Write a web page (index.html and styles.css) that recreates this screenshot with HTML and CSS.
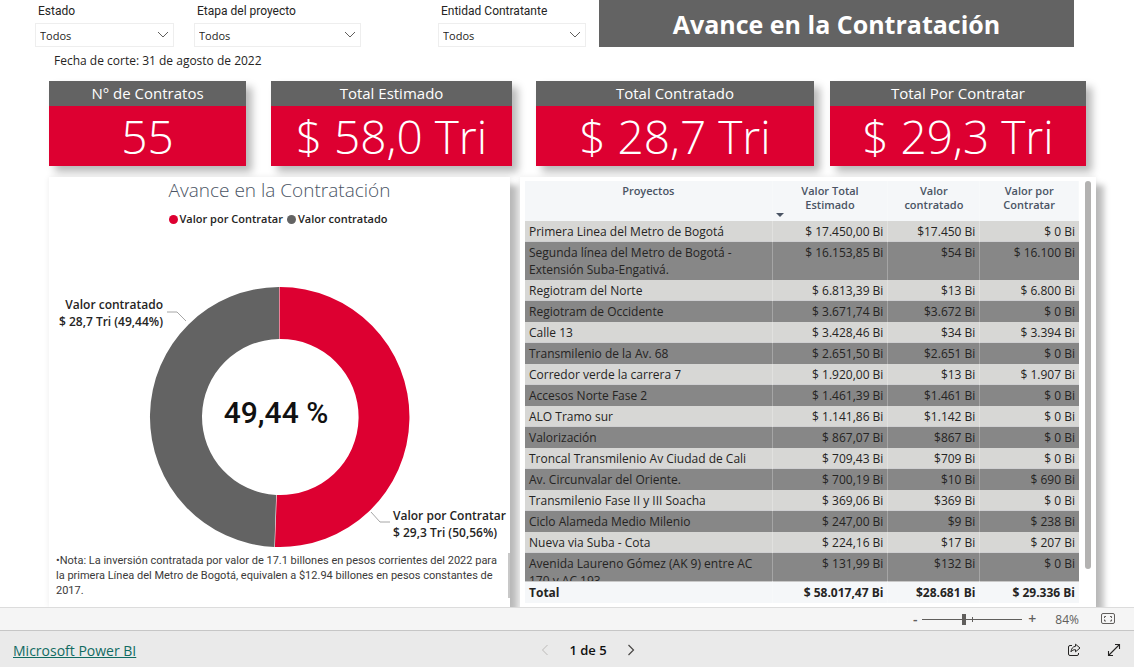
FILE: index.html
```html
<!DOCTYPE html>
<html lang="es">
<head>
<meta charset="utf-8">
<meta name="viewport" content="width=device-width, initial-scale=1">
<title>Avance en la Contratación</title>
<link rel="stylesheet" href="styles.css">
</head>
<body>
<main class="report">
  <header class="top">
    <div class="slicer slicer-state">
      <label for="estado">Estado</label>
      <div class="select-box">
        <select id="estado"><option>Todos</option></select>
        <svg class="chevron" viewBox="0 0 12 8" aria-hidden="true"><path d="M1 1l5 5 5-5"/></svg>
      </div>
    </div>
    <div class="slicer slicer-stage">
      <label for="etapa">Etapa del proyecto</label>
      <div class="select-box">
        <select id="etapa"><option>Todos</option></select>
        <svg class="chevron" viewBox="0 0 12 8" aria-hidden="true"><path d="M1 1l5 5 5-5"/></svg>
      </div>
    </div>
    <div class="slicer slicer-entity">
      <label for="entidad">Entidad Contratante</label>
      <div class="select-box">
        <select id="entidad"><option>Todos</option></select>
        <svg class="chevron" viewBox="0 0 12 8" aria-hidden="true"><path d="M1 1l5 5 5-5"/></svg>
      </div>
    </div>
    <h1 class="banner">Avance en la Contratación</h1>
  </header>
  <p class="cutoff">Fecha de corte: 31 de agosto de 2022</p>

  <section class="cards">
    <article class="card card-count"><h2>N° de Contratos</h2><p>55</p></article>
    <article class="card card-estimated"><h2>Total Estimado</h2><p>$ 58,0 Tri</p></article>
    <article class="card card-contracted"><h2>Total Contratado</h2><p>$ 28,7 Tri</p></article>
    <article class="card card-pending"><h2>Total Por Contratar</h2><p>$ 29,3 Tri</p></article>
  </section>

  <section class="panels">
    <article class="panel chart-panel">
      <h2 class="chart-title">Avance en la Contratación</h2>
      <ul class="legend">
        <li><span class="dot dot-red"></span>Valor por Contratar</li>
        <li><span class="dot dot-gray"></span>Valor contratado</li>
      </ul>
      <svg class="donut" viewBox="0 -2 461 324" role="img" aria-label="Valor contratado 49,44 %, Valor por Contratar 50,56 %">
        <path fill="#dd0031" d="M230.500 57A129.500 130 0 1 1 225.900 316.900L227.800 264.900A78 78 0 1 0 230.500 109Z"/>
        <path fill="#636363" d="M230 57A129.500 130 0 0 0 225.400 316.900L227.200 264.900A78 78 0 0 1 230 109Z"/>
        <path class="leader" d="M118 82h10l9 9M322 282l9 10h10"/>
        <text class="data-label" x="114" y="79" text-anchor="end">Valor contratado</text>
        <text class="data-label" x="114" y="96" text-anchor="end">$ 28,7 Tri (49,44%)</text>
        <text class="data-label" x="344" y="290">Valor por Contratar</text>
        <text class="data-label" x="344" y="307">$ 29,3 Tri (50,56%)</text>
        <text class="percent" x="227" y="193" text-anchor="middle">49,44 %</text>
      </svg>
      <div class="note">
        <p>•Nota: La inversión contratada por valor de 17.1 billones en pesos corrientes del 2022 para la primera Línea del Metro de Bogotá, equivalen a $12.94 billones en pesos constantes de 2017.</p>
        <span class="note-scroll"></span>
      </div>
    </article>

    <article class="panel table-panel">
      <div class="table-view">
        <table>
          <colgroup><col class="col-name"><col class="col-total"><col class="col-done"><col class="col-left"></colgroup>
          <thead>
            <tr><th>Proyectos<span class="sort"></span></th><th>Valor Total Estimado</th><th>Valor contratado</th><th>Valor por Contratar</th></tr>
          </thead>
          <tbody>
            <tr><td>Primera Linea del Metro de Bogotá</td><td>$ 17.450,00 Bi</td><td>$17.450 Bi</td><td>$ 0 Bi</td></tr>
            <tr><td>Segunda línea del Metro de Bogotá - Extensión Suba-Engativá.</td><td>$ 16.153,85 Bi</td><td>$54 Bi</td><td>$ 16.100 Bi</td></tr>
            <tr><td>Regiotram del Norte</td><td>$ 6.813,39 Bi</td><td>$13 Bi</td><td>$ 6.800 Bi</td></tr>
            <tr><td>Regiotram de Occidente</td><td>$ 3.671,74 Bi</td><td>$3.672 Bi</td><td>$ 0 Bi</td></tr>
            <tr><td>Calle 13</td><td>$ 3.428,46 Bi</td><td>$34 Bi</td><td>$ 3.394 Bi</td></tr>
            <tr><td>Transmilenio de la Av. 68</td><td>$ 2.651,50 Bi</td><td>$2.651 Bi</td><td>$ 0 Bi</td></tr>
            <tr><td>Corredor verde la carrera 7</td><td>$ 1.920,00 Bi</td><td>$13 Bi</td><td>$ 1.907 Bi</td></tr>
            <tr><td>Accesos Norte Fase 2</td><td>$ 1.461,39 Bi</td><td>$1.461 Bi</td><td>$ 0 Bi</td></tr>
            <tr><td>ALO Tramo sur</td><td>$ 1.141,86 Bi</td><td>$1.142 Bi</td><td>$ 0 Bi</td></tr>
            <tr><td>Valorización</td><td>$ 867,07 Bi</td><td>$867 Bi</td><td>$ 0 Bi</td></tr>
            <tr><td>Troncal Transmilenio Av Ciudad de Cali</td><td>$ 709,43 Bi</td><td>$709 Bi</td><td>$ 0 Bi</td></tr>
            <tr><td>Av. Circunvalar del Oriente.</td><td>$ 700,19 Bi</td><td>$10 Bi</td><td>$ 690 Bi</td></tr>
            <tr><td>Transmilenio Fase II y III Soacha</td><td>$ 369,06 Bi</td><td>$369 Bi</td><td>$ 0 Bi</td></tr>
            <tr><td>Ciclo Alameda Medio Milenio</td><td>$ 247,00 Bi</td><td>$9 Bi</td><td>$ 238 Bi</td></tr>
            <tr><td>Nueva via Suba - Cota</td><td>$ 224,16 Bi</td><td>$17 Bi</td><td>$ 207 Bi</td></tr>
            <tr><td>Avenida Laureno Gómez (AK 9) entre AC 170 y AC 193</td><td>$ 131,99 Bi</td><td>$132 Bi</td><td>$ 0 Bi</td></tr>
          </tbody>
          <tfoot>
            <tr><td>Total</td><td>$ 58.017,47 Bi</td><td>$28.681 Bi</td><td>$ 29.336 Bi</td></tr>
          </tfoot>
        </table>
      </div>
      <div class="scroll-track"><span class="scroll-thumb"></span></div>
    </article>
  </section>
</main>

<div class="zoom-bar">
  <button type="button" class="zoom-step" aria-label="Alejar">-</button>
  <input class="zoom-range" type="range" min="0" max="100" value="41" aria-label="Zoom">
  <button type="button" class="zoom-step" aria-label="Acercar">+</button>
  <output class="zoom-value">84%</output>
  <button type="button" class="icon-button" aria-label="Ajustar a la página">
    <svg width="16" height="12" viewBox="0 0 16 12" fill="none" stroke="#605e5c"><rect x="1.500" y=".5" width="13" height="10" rx="1.500"/><path d="M4.500 5V3.500H6M10 3.500h1.500V5M11.500 6.500V8H10M6 8H4.500V6.500"/></svg>
  </button>
</div>

<footer class="status-bar">
  <a class="brand" href="#">Microsoft Power BI</a>
  <nav class="pager" aria-label="Páginas">
    <button type="button" class="icon-button" aria-label="Anterior" disabled><svg width="8" height="12" viewBox="0 0 8 12" fill="none" stroke="#bdbbb9"><path d="M6.500 1L1.500 6l5 5"/></svg></button>
    <span>1 de 5</span>
    <button type="button" class="icon-button" aria-label="Siguiente"><svg width="8" height="12" viewBox="0 0 8 12" fill="none" stroke="#484644" stroke-width="1.200"><path d="M1.500 1l5 5-5 5"/></svg></button>
  </nav>
  <div class="actions">
    <button type="button" class="icon-button" aria-label="Compartir"><svg width="14" height="14" viewBox="0 0 14 14" fill="none" stroke="#252423" stroke-linejoin="round"><path d="M5 2.500H3a1.500 1.500 0 0 0-1.500 1.500v7A1.500 1.500 0 0 0 3 12.500h7a1.500 1.500 0 0 0 1.500-1.500v-1"/><path d="M8.500 1.200L13 5 8.500 8.800V6.700C6.500 6.600 5 7.300 4 8.800 4.200 5.800 5.700 3.600 8.500 3.300Z"/></svg></button>
    <button type="button" class="icon-button" aria-label="Pantalla completa"><svg width="14" height="14" viewBox="0 0 14 14" fill="none" stroke="#252423" stroke-width="1.100"><path d="M1.500 12.500l11-11M8 1.500h4.500V6M1.500 8v4.500H6"/></svg></button>
  </div>
</footer>
</body>
</html>
```
FILE: styles.css
```css
* { box-sizing: border-box; }

body {
  margin: 0;
  height: 100vh;
  display: flex;
  flex-direction: column;
  background: #fff;
  color: #252423;
  font-family: "Open Sans", "Noto Sans", sans-serif;
  font-size: 12px;
}

h1, h2, p, ul { margin: 0; padding: 0; }

button {
  border: 0;
  padding: 0;
  background: none;
  color: inherit;
  font: inherit;
}

.report {
  flex: 1;
  min-height: 0;
  overflow: hidden;
  display: flex;
  flex-direction: column;
}

/* Filters and banner */
.top {
  display: flex;
  height: 47px;
  padding: 0 60px 0 35px;
}

.slicer { padding-top: 4px; }
.slicer-state { flex: 139 1 0; }
.slicer-stage { flex: 167 1 0; margin-left: 20px; }
.slicer-entity { flex: 148 1 0; margin-left: 77px; }

.slicer label {
  display: block;
  padding-left: 3px;
  font-family: Roboto, sans-serif;
  font-size: 12px;
  line-height: 15px;
}

.select-box {
  display: flex;
  align-items: center;
  height: 24px;
  margin-top: 4px;
  border: 1px solid #eee;
}

.select-box select {
  flex: 1;
  min-width: 0;
  padding: 1px 4px 0;
  border: 0;
  appearance: none;
  background: none;
  color: #252423;
  font-family: inherit;
  font-size: 11px;
}

.chevron {
  width: 12px;
  height: 8px;
  margin-right: 4px;
  fill: none;
  stroke: #605e5c;
}

.banner {
  flex: 475 1 0;
  margin-left: 13px;
  background: #636363;
  color: #fff;
  font-size: 25px;
  font-weight: 700;
  line-height: 49px;
  text-align: center;
}

.cutoff {
  padding-left: 54px;
  line-height: 16px;
  margin: 6px 0 12px;
}

/* Cards */
.cards {
  display: flex;
  padding: 0 48px 0 49px;
}

.card {
  background: #dd0031;
  color: #fff;
  text-align: center;
  box-shadow: 6px 6px 8px rgba(0, 0, 0, .28);
}

.card-count { flex: 197 1 0; }
.card-estimated { flex: 241 1 0; margin-left: 25px; }
.card-contracted { flex: 278 1 0; margin-left: 24px; }
.card-pending { flex: 256 1 0; margin-left: 16px; }

.card h2 {
  background: #636363;
  font-size: 15px;
  font-weight: 400;
  line-height: 25px;
}

.card p {
  font-size: 46px;
  font-weight: 300;
  line-height: 60px;
  height: 60px;
}

/* Panels */
.panels {
  flex: 1;
  min-height: 0;
  display: grid;
  grid-template-columns: 461fr 576fr;
  column-gap: 10px;
  padding: 0 38px 0 49px;
  margin-top: 11px;
}

.panel {
  min-height: 0;
  background: #fff;
  box-shadow: 8px 8px 6px rgba(0, 0, 0, .25), 0 0 6px rgba(0, 0, 0, .08);
}

.chart-panel {
  display: flex;
  flex-direction: column;
}

.chart-title {
  color: #4a5464;
  font-size: 19px;
  font-weight: 300;
  line-height: 26px;
  text-align: center;
}

.legend {
  display: flex;
  justify-content: center;
  gap: 4px;
  list-style: none;
  font-size: 11px;
  font-weight: 600;
  line-height: 16px;
  padding: 8px 3px 0 0;
}

.legend li {
  display: flex;
  align-items: center;
  gap: 2px;
}

.dot {
  width: 9px;
  height: 9px;
  border-radius: 50%;
}

.dot-red { background: #dd0031; }
.dot-gray { background: #636363; }

.donut {
  display: block;
  width: 100%;
  flex: 1;
  min-height: 0;
}

.leader { fill: none; stroke: #a6a6a6; }

.data-label {
  fill: #252423;
  font-size: 12px;
  font-weight: 600;
}

.percent {
  fill: #111;
  font-family: Roboto, sans-serif;
  font-size: 30px;
  font-weight: 500;
}

.note {
  display: flex;
  justify-content: space-between;
  padding: 0 0 9px 7px;
  color: #3b3a39;
  font-family: Roboto, "Open Sans", sans-serif;
  font-size: 11px;
  line-height: 15px;
}

.note-scroll {
  flex: none;
  width: 2px;
  background: #c8c8c8;
}

/* Table */
.table-panel {
  display: flex;
  gap: 6px;
  padding: 4px 5px;
}

.table-view {
  flex: 1;
  min-width: 0;
  overflow: hidden;
}

table {
  width: 100%;
  table-layout: fixed;
  border-collapse: separate;
  border-spacing: 0;
}

.col-name { width: 44.7%; }
.col-total { width: 20.9%; }
.col-done { width: 16.6%; }
.col-left { width: 17.8%; }

th, td {
  padding: 2px 4px;
  border-right: 1px solid rgba(255, 255, 255, .25);
  vertical-align: top;
  text-align: right;
  line-height: 17px;
}

td:last-child { border-right: 0; }

td:first-child { text-align: left; }

thead th {
  position: sticky;
  top: 0;
  height: 40px;
  padding: 3px 4px;
  background: #f5f7f9;
  color: #4a5464;
  font-size: 11px;
  font-weight: 600;
  line-height: 14px;
  text-align: center;
}

thead th:nth-child(2),
thead th:nth-child(4) { padding: 3px 16px; }
thead th:nth-child(3) { padding: 3px 8px; }

.sort {
  position: absolute;
  right: -12px;
  bottom: 4px;
  border: 4px solid transparent;
  border-top-color: #4a5464;
  border-bottom: 0;
}

thead th:first-child { z-index: 1; }

tbody td {
  background: #d7d7d5;
  box-shadow: inset 0 -1px #cfcfd1;
  font-size: 12px;
}

tbody tr:nth-child(even) td {
  background: #878787;
  box-shadow: none;
}

tfoot td {
  position: sticky;
  bottom: 0;
  height: 22px;
  border-top: 1px solid #c8c8c8;
  background: #f5f7f9;
  font-size: 12px;
  font-weight: 700;
}

.scroll-track { width: 6px; }

.scroll-thumb {
  display: block;
  height: 92%;
  border-radius: 3px;
  background: #b3b2b1;
}

/* Zoom bar */
.zoom-bar {
  display: flex;
  align-items: center;
  justify-content: flex-end;
  height: 23px;
  padding-right: 18px;
  border-top: 1px solid #dcdcdc;
  background: #f5f5f5;
  color: #605e5c;
}

.zoom-step {
  width: 14px;
  font-size: 14px;
  font-weight: 600;
  line-height: 20px;
}

.zoom-range {
  width: 100px;
  height: 12px;
  margin: 0 3px 0 0;
  appearance: none;
  background:
    linear-gradient(#605e5c, #605e5c) 50px 50% / 1px 5px no-repeat,
    linear-gradient(#605e5c, #605e5c) 0 50% / 100% 1px no-repeat;
}

.zoom-range::-webkit-slider-thumb {
  appearance: none;
  width: 4px;
  height: 11px;
  background: #605e5c;
}

.zoom-value { margin: 0 21px 0 16px; }

.icon-button {
  display: flex;
  align-items: center;
}

/* Status bar */
.status-bar {
  display: grid;
  grid-template-columns: 1fr auto 1fr;
  align-items: center;
  height: 37px;
  padding: 2px 13px 0;
  border-top: 1px solid #c6c6c6;
  background: #eaeaea;
}

.brand {
  justify-self: start;
  color: #116b62;
  font-size: 14px;
}

.pager {
  display: flex;
  align-items: center;
  gap: 20px;
  margin-left: 42px;
  color: #111;
  font-size: 13px;
  font-weight: 600;
}

.actions {
  display: flex;
  justify-content: flex-end;
  gap: 26px;
}
```
